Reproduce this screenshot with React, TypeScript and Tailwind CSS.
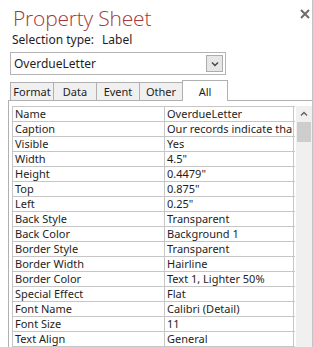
import React from "react";

const rows: [string, string][] = [
  ["Name", "OverdueLetter"],
  ["Caption", "Our records indicate tha"],
  ["Visible", "Yes"],
  ["Width", "4.5\""],
  ["Height", "0.4479\""],
  ["Top", "0.875\""],
  ["Left", "0.25\""],
  ["Back Style", "Transparent"],
  ["Back Color", "Background 1"],
  ["Border Style", "Transparent"],
  ["Border Width", "Hairline"],
  ["Border Color", "Text 1, Lighter 50%"],
  ["Special Effect", "Flat"],
  ["Font Name", "Calibri (Detail)"],
  ["Font Size", "11"],
  ["Text Align", "General"],
];

const tabs = ["Format", "Data", "Event", "Other"];

export default function App() {
  return (
    <div
      className="w-[313px] h-[347px] bg-white border-r border-[#c4c4c4] overflow-hidden relative text-[#1e1e1e]"
      style={{ fontFamily: '"Noto Sans", "Open Sans", sans-serif' }}
    >
      <svg className="absolute left-[300px] top-[9px]" width="10" height="10" viewBox="0 0 10 10">
        <path d="M1 1 L9 9 M9 1 L1 9" stroke="#6d6d6d" strokeWidth="2" />
      </svg>

      <div className="pl-[13px] pt-[4px] h-[32px]">
        <div
          className="text-[21px] leading-[28px] font-light text-[#a4373a] tracking-[-0.2px]"
          style={{ fontFamily: '"Open Sans", "Noto Sans", sans-serif' }}
        >
          Property Sheet
        </div>
      </div>

      <div className="pl-[12px] h-[20px] text-[12px] leading-[16px] flex">
        <span>Selection type:</span>
        <span className="ml-[8px]">Label</span>
      </div>

      <div className="ml-[10px] w-[216px] h-[23px] border border-[#b4b4b4] flex items-center pl-[3px] pr-[2px]">
        <span className="flex-1 text-[12px] leading-[16px]">OverdueLetter</span>
        <div className="w-[17px] h-[17px] border border-[#adadad] bg-[#e6e6e6] flex items-center justify-center">
          <svg width="8" height="6" viewBox="0 0 8 6">
            <path d="M1 1.5 L4 4.5 L7 1.5" stroke="#444" strokeWidth="1.4" fill="none" />
          </svg>
        </div>
      </div>

      <div className="ml-[8px] mt-[5px]">
        <div className="flex items-end h-[21px] border-b border-[#b0b0b0] pl-[2px]">
          {tabs.map((t) => (
            <div
              key={t}
              className="w-[43px] h-[18px] bg-[#f0f0f0] border-t border-l border-[#b0b0b0] flex items-center justify-center text-[11px] leading-[15px]"
            >
              {t}
            </div>
          ))}
          <div className="w-[46px] h-[21px] -mb-px bg-white border-t border-x border-[#b0b0b0] flex items-start justify-center pt-[3px] text-[11px] leading-[15px]">
            All
          </div>
        </div>

        <div className="border-l border-[#b0b0b0] pl-[3px] pt-[5px] flex">
          <div className="w-[283px] border-t border-l border-[#c6c6c6]">
            {rows.map(([k, v]) => (
              <div key={k} className="flex h-[15px] border-b border-[#c6c6c6] text-[11px] leading-[14px]">
                <div className="w-[152px] border-r border-[#c6c6c6] pl-[2px] overflow-hidden whitespace-nowrap">
                  {k}
                </div>
                <div className="w-[129px] border-r border-[#c6c6c6] pl-[2px] overflow-hidden whitespace-nowrap">
                  {v}
                </div>
              </div>
            ))}
          </div>
          <div className="w-[16px] ml-[1px] h-[245px] bg-[#f0f0f0] flex flex-col items-center">
            <div className="h-[16px] flex items-center justify-center">
              <svg width="8" height="6" viewBox="0 0 8 6">
                <path d="M1 4.5 L4 1.5 L7 4.5" stroke="#606060" strokeWidth="1.4" fill="none" />
              </svg>
            </div>
            <div className="w-[14px] h-[20px] bg-[#cdcdcd]" />
          </div>
        </div>
      </div>
    </div>
  );
}
